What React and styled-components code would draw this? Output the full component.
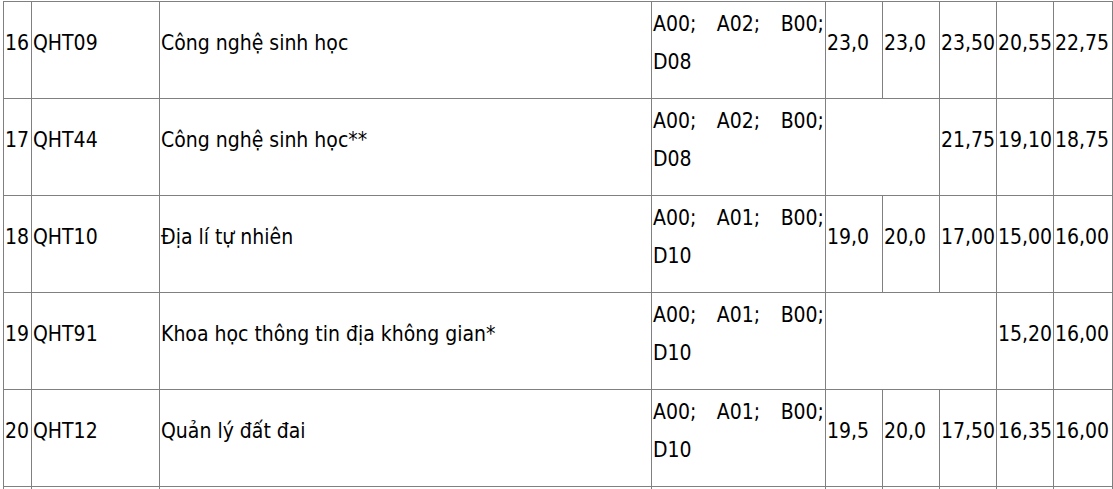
import React from "react";
import styled, { createGlobalStyle } from "styled-components";

const GlobalStyle = createGlobalStyle`
  html, body {
    margin: 0;
    padding: 0;
    background: #fff;
  }
`;

const rows = [
  { no: 16, code: "QHT09", name: "Công nghệ sinh học", groups: ["A00;", "A02;", "B00;"], last: "D08", scores: ["23,0", "23,0", "23,50", "20,55", "22,75"] },
  { no: 17, code: "QHT44", name: "Công nghệ sinh học**", groups: ["A00;", "A02;", "B00;"], last: "D08", blank: 2, scores: ["21,75", "19,10", "18,75"] },
  { no: 18, code: "QHT10", name: "Địa lí tự nhiên", groups: ["A00;", "A01;", "B00;"], last: "D10", scores: ["19,0", "20,0", "17,00", "15,00", "16,00"] },
  { no: 19, code: "QHT91", name: "Khoa học thông tin địa không gian*", groups: ["A00;", "A01;", "B00;"], last: "D10", blank: 3, scores: ["15,20", "16,00"] },
  { no: 20, code: "QHT12", name: "Quản lý đất đai", groups: ["A00;", "A01;", "B00;"], last: "D10", scores: ["19,5", "20,0", "17,50", "16,35", "16,00"] },
];

const widths = [28, 128, 492, 174, 57, 57, 57, 57, 59];

function App() {
  return (
    <>
      <GlobalStyle />
      <Page>
        <ScoreTable>
          <colgroup>
            {widths.map((w, i) => (
              <col key={i} style={{ width: w }} />
            ))}
          </colgroup>
          <tbody>
            {rows.map(row => (
              <Row key={row.no}>
                <Cell>{row.no}</Cell>
                <Cell>{row.code}</Cell>
                <Cell>{row.name}</Cell>
                <Cell $justify>
                  {row.groups.join(" ")}
                  <br />
                  {row.last}
                </Cell>
                {row.blank && <Cell colSpan={row.blank} />}
                {row.scores.map((s, i) => (
                  <Cell key={i}>{s}</Cell>
                ))}
              </Row>
            ))}
            {/* next row, only its top edge shows in the frame */}
            <Row>
              {widths.map((w, i) => (
                <Cell key={i} />
              ))}
            </Row>
          </tbody>
        </ScoreTable>
      </Page>
    </>
  );
}

const Page = styled.div`
  padding: 1px 0 0 3px;
`;

const ScoreTable = styled.table`
  border-collapse: collapse;
  table-layout: fixed;
  width: 1109px;
  font-family: "DejaVu Sans Condensed", "DejaVu Sans", sans-serif;
  font-size: 21px;
  color: #000;
`;

const Row = styled.tr`
  height: 97px;
`;

const Cell = styled.td`
  border: 1px solid #808080;
  padding: 0 1px 14px 1px;
  vertical-align: middle;
  line-height: 38px;
  white-space: nowrap;
  overflow: hidden;
  text-align: ${props => (props.$justify ? "justify" : "left")};
  text-align-last: ${props => (props.$justify ? "justify" : "auto")};
`;

export default App;
